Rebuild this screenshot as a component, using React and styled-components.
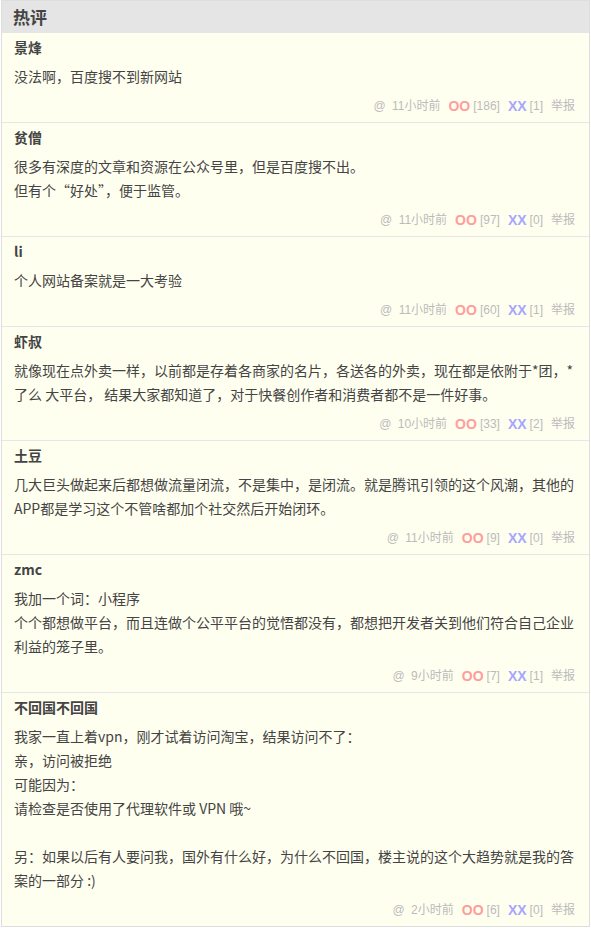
import React from 'react'
import styled, { createGlobalStyle } from 'styled-components'

const GlobalStyle = createGlobalStyle`
  body {
    margin: 0;
    background: #fff;
    font-family: "Noto Sans CJK SC", "Microsoft YaHei", sans-serif;
  }
`

const comments = [
  {
    author: '景烽',
    lines: ['没法啊，百度搜不到新网站'],
    time: '11小时前',
    oo: 186,
    xx: 1,
  },
  {
    author: '贫僧',
    lines: ['很多有深度的文章和资源在公众号里，但是百度搜不出。', '但有个“好处”，便于监管。'],
    time: '11小时前',
    oo: 97,
    xx: 0,
  },
  {
    author: 'li',
    lines: ['个人网站备案就是一大考验'],
    time: '11小时前',
    oo: 60,
    xx: 1,
  },
  {
    author: '虾叔',
    lines: [
      '就像现在点外卖一样，以前都是存着各商家的名片，各送各的外卖，现在都是依附于*团，*了么 大平台， 结果大家都知道了，对于快餐创作者和消费者都不是一件好事。',
    ],
    time: '10小时前',
    oo: 33,
    xx: 2,
  },
  {
    author: '土豆',
    lines: [
      '几大巨头做起来后都想做流量闭流，不是集中，是闭流。就是腾讯引领的这个风潮，其他的APP都是学习这个不管啥都加个社交然后开始闭环。',
    ],
    time: '11小时前',
    oo: 9,
    xx: 0,
  },
  {
    author: 'zmc',
    lines: [
      '我加一个词：小程序',
      '个个都想做平台，而且连做个公平平台的觉悟都没有，都想把开发者关到他们符合自己企业利益的笼子里。',
    ],
    time: '9小时前',
    oo: 7,
    xx: 1,
  },
  {
    author: '不回国不回国',
    lines: [
      '我家一直上着vpn，刚才试着访问淘宝，结果访问不了：',
      '亲，访问被拒绝',
      '可能因为：',
      '请检查是否使用了代理软件或 VPN 哦~',
      '',
      '另：如果以后有人要问我，国外有什么好，为什么不回国，楼主说的这个大趋势就是我的答案的一部分 :)',
    ],
    time: '2小时前',
    oo: 6,
    xx: 0,
  },
]

const Panel = styled.div`
  margin: 0 1px;
  border: 1px solid #dedede;
  background: #fffff0;
`

const Header = styled.h3`
  margin: 0;
  height: 32px;
  line-height: 32px;
  padding: 0 11px;
  background: #e5e5e5;
  color: #444;
  font-size: 17px;
  font-weight: bold;
`

const Item = styled.div`
  padding: 4px 12px 6px;
  border-top: 1px solid #e6e6e6;
  &:first-of-type {
    border-top: none;
  }
`

const Author = styled.div`
  font-size: 14px;
  line-height: 20px;
  font-weight: bold;
  color: #444;
`

const Body = styled.div`
  margin-top: 7px;
  font-size: 14px;
  line-height: 24px;
  color: #444;
  min-height: 24px;
`

const Meta = styled.div`
  margin-top: 8px;
  display: flex;
  justify-content: flex-end;
  align-items: center;
  gap: 8px;
  padding-right: 2px;
  font-family: "Liberation Sans", "Noto Sans CJK SC", sans-serif;
  font-size: 12px;
  line-height: 20px;
  color: #bbb;
`

const Group = styled.span`
  display: inline-flex;
  align-items: center;
  gap: 3px;
`

const Vote = styled.b`
  font-size: 14px;
  font-weight: bold;
  color: ${p => (p.$up ? '#ff9d9d' : '#a6a6ff')};
`

function Comment({ c }) {
  return (
    <Item>
      <Author>{c.author}</Author>
      <Body>
        {c.lines.map((l, i) => (
          <div key={i}>{l || '\u00a0'}</div>
        ))}
      </Body>
      <Meta>
        <Group>
          <span>@</span>
          <span>&nbsp;{c.time}</span>
        </Group>
        <Group>
          <Vote $up>OO</Vote>
          <span>[{c.oo}]</span>
        </Group>
        <Group>
          <Vote>XX</Vote>
          <span>[{c.xx}]</span>
        </Group>
        <span>举报</span>
      </Meta>
    </Item>
  )
}

export default function App() {
  return (
    <>
      <GlobalStyle />
      <Panel>
        <Header>热评</Header>
        {comments.map((c, i) => (
          <Comment key={i} c={c} />
        ))}
      </Panel>
    </>
  )
}
